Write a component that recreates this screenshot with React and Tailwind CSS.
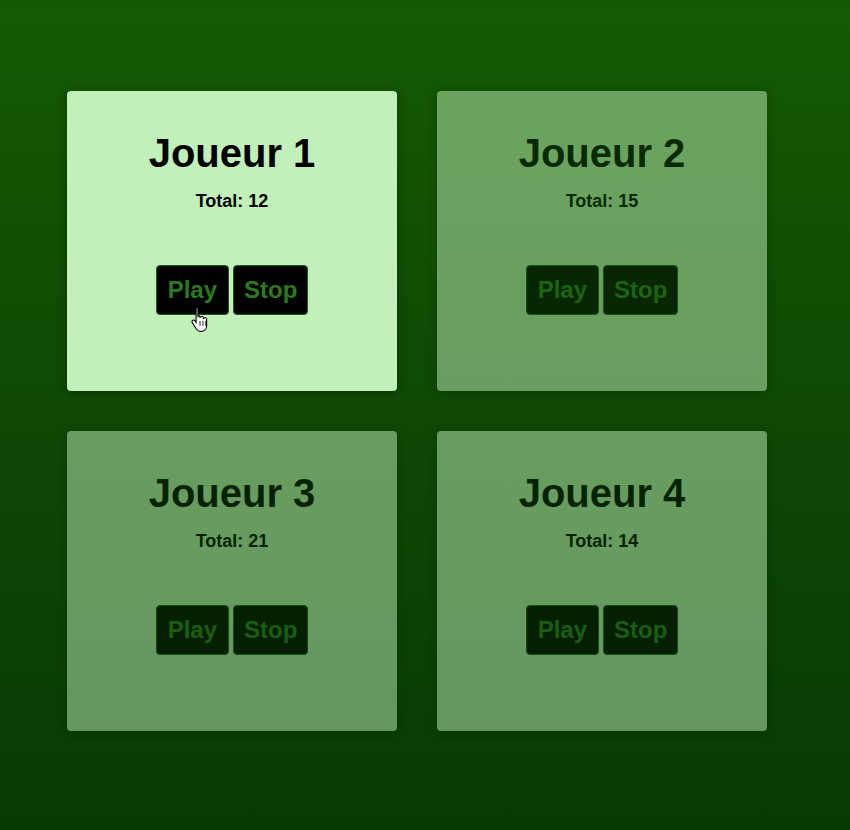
import React from 'react';

const players = [
  { name: 'Joueur 1', total: 12, active: true },
  { name: 'Joueur 2', total: 15 },
  { name: 'Joueur 3', total: 21 },
  { name: 'Joueur 4', total: 14 },
];

const HandCursor = () => (
  <svg width="22" height="27" viewBox="0 0 18 22" className="absolute left-[190px] top-[305px] pointer-events-none">
    <path
      d="M5 1.5c.9 0 1.5.6 1.5 1.5v7l.2-1.4c.9 0 1.5.6 1.5 1.4v.5c.1-.7.7-1.1 1.4-1.1.8 0 1.4.6 1.4 1.4v.6c.1-.6.7-1 1.300-1 .8 0 1.3.6 1.3 1.4v5.2c0 2.8-2 4.5-4.5 4.5H8.6c-1.4 0-2.5-.6-3.300-1.700L1.9 14.400c-.5-.7-.3-1.500.4-1.900.6-.4 1.400-.2 1.800.4l.9 1.200V3c0-.9.6-1.500 1.500-1.500z"
      fill="#fff"
      stroke="#000"
      strokeWidth="0.9"
    />
    <path d="M8.2 13v4M10.6 13v4M12.9 13v4" stroke="#000" strokeWidth="0.7" />
  </svg>
);

const PlayerCard = ({ player }) => (
  <div
    className={`w-[330px] h-[300px] rounded-[4px] bg-[#c1f0b9] shadow-[0_2px_10px_rgba(0,0,0,0.35)] flex flex-col items-center text-black ${
      player.active ? '' : 'opacity-50'
    }`}
  >
    <h1 className="mt-[39px] text-[40px] leading-[46px] font-bold">{player.name}</h1>
    <p className="mt-[15px] text-[18px] leading-[20px] font-bold">Total: {player.total}</p>
    <div className="mt-[54px] flex gap-[4px]">
      <button className="h-[50px] px-[11px] bg-black text-[#2b7a1f] text-[24px] font-bold rounded-[4px] border border-[#1d5a13]">
        Play
      </button>
      <button className="h-[50px] px-[10px] bg-black text-[#2b7a1f] text-[24px] font-bold rounded-[4px] border border-[#1d5a13]">
        Stop
      </button>
    </div>
  </div>
);

export default function App() {
  return (
    <div
      className="relative w-full min-h-[830px] bg-gradient-to-b from-[#155a03] to-[#073a04] pt-[91px] pl-[67px]"
      style={{ fontFamily: '"Liberation Sans", Arial, sans-serif' }}
    >
      <div className="grid grid-cols-[330px_330px] gap-[40px]">
        {players.map((p) => (
          <PlayerCard key={p.name} player={p} />
        ))}
      </div>
      <HandCursor />
    </div>
  );
}
